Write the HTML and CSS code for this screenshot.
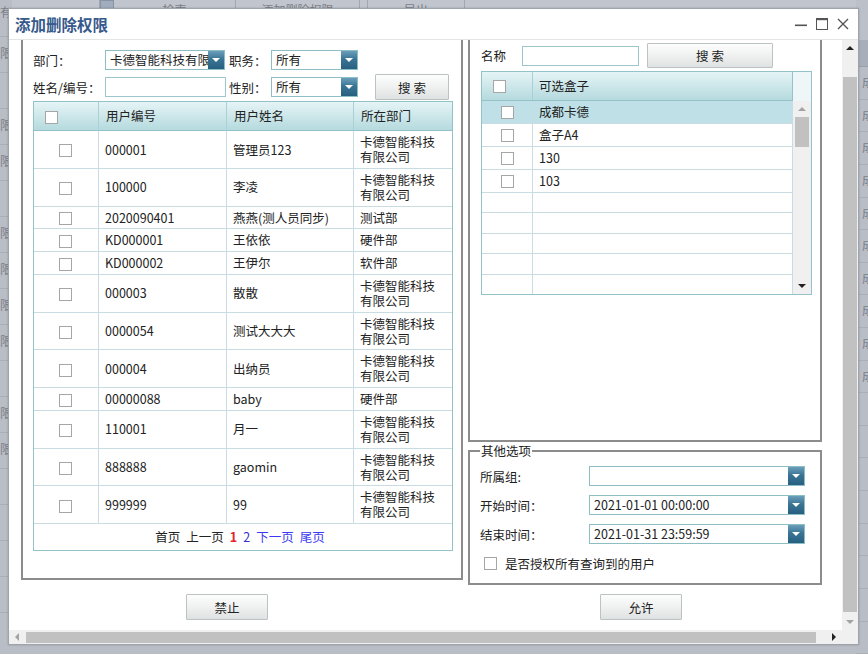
FILE: index.html
```html
<!DOCTYPE html>
<html lang="zh-CN">
<head>
<meta charset="utf-8">
<title>添加删除权限</title>
<link rel="stylesheet" href="styles.css">
</head>
<body>
<div class="page">
  <div class="pg-left">
    <div class="pl-head">有</div>
    <div class="pl-row">限</div>
    <div class="pl-row"></div>
    <div class="pl-row">限</div>
    <div class="pl-row">限</div>
    <div class="pl-row"></div>
    <div class="pl-row">限</div>
    <div class="pl-row">限</div>
    <div class="pl-row">限</div>
    <div class="pl-row">限</div>
    <div class="pl-row"></div>
    <div class="pl-row">限</div>
    <div class="pl-row">限</div>
    <div class="pl-row"></div>
    <div class="pl-row"></div>
    <div class="pl-row"></div>
    <div class="pl-row"></div>
  </div>
  <div class="pg-center">
    <div class="page-head">
      <div class="ph ph-1"></div>
      <div class="ph ph-2"></div>
      <div class="ph ph-3">检索</div>
      <div class="ph ph-4">添加删除权限</div>
      <div class="ph ph-5"></div>
      <div class="ph ph-6">导出</div>
      <div class="ph ph-7"></div>
    </div>
  </div>
  <div class="pg-right">
    <div class="pr-top"></div>
    <div class="pr-head"></div>
    <div class="pr-row">成</div>
    <div class="pr-row">成</div>
    <div class="pr-row">成</div>
    <div class="pr-row">成</div>
    <div class="pr-row">成</div>
    <div class="pr-row">成</div>
    <div class="pr-row">成</div>
    <div class="pr-row">成</div>
    <div class="pr-row">成</div>
    <div class="pr-row">成</div>
    <div class="pr-row"></div>
    <div class="pr-row"></div>
    <div class="pr-row"></div>
    <div class="pr-row"></div>
    <div class="pr-row"></div>
    <div class="pr-row"></div>
    <div class="pr-row"></div>
    <div class="pr-row"></div>
  </div>
</div>

<div class="dialog">
  <div class="titlebar">
    <div class="title">添加删除权限</div>
    <div class="win-ctrls">
      <svg viewBox="0 0 12 12" aria-label="最小化"><rect x="0" y="6.5" width="12" height="1.6" fill="#555"/></svg>
      <svg viewBox="0 0 12 12" aria-label="最大化"><rect x="0.5" y="0.5" width="11" height="11" fill="none" stroke="#555" stroke-width="1"/><rect x="0" y="0" width="12" height="2.2" fill="#555"/></svg>
      <svg viewBox="0 0 12 12" aria-label="关闭"><path d="M1 1 L11 11 M11 1 L1 11" stroke="#555" stroke-width="1.4" fill="none"/></svg>
    </div>
  </div>

  <div class="dlg-main">
    <div class="viewport">
      <div class="content">
        <div class="panel panel-left">
          <div class="filters">
            <span class="lbl">部门：</span>
            <div class="combo w120"><span class="combo-text">卡德智能科技有限</span><span class="combo-btn"><i class="tri-w"></i></span></div>
            <span class="lbl">职务：</span>
            <div class="combo"><span class="combo-text">所有</span><span class="combo-btn"><i class="tri-w"></i></span></div>
            <span></span>
            <span></span>

            <span class="lbl">姓名/编号：</span>
            <input class="txt w121" type="text">
            <span class="lbl">性别：</span>
            <div class="combo"><span class="combo-text">所有</span><span class="combo-btn"><i class="tri-w"></i></span></div>
            <span></span>
            <button class="btn btn-search">搜 索</button>
          </div>

          <table class="ugrid">
            <colgroup><col class="k1"><col class="k2"><col class="k3"><col class="k4"></colgroup>
            <thead>
              <tr><th class="th-cb"><span class="cb"></span></th><th>用户编号</th><th>用户姓名</th><th>所在部门</th></tr>
            </thead>
            <tbody>
              <tr><td class="cbc"><span class="cb"></span></td><td>000001</td><td>管理员123</td><td>卡德智能科技有限公司</td></tr>
              <tr><td class="cbc"><span class="cb"></span></td><td>100000</td><td>李凌</td><td>卡德智能科技有限公司</td></tr>
              <tr><td class="cbc"><span class="cb"></span></td><td>2020090401</td><td>燕燕(测人员同步)</td><td>测试部</td></tr>
              <tr><td class="cbc"><span class="cb"></span></td><td>KD000001</td><td>王依依</td><td>硬件部</td></tr>
              <tr><td class="cbc"><span class="cb"></span></td><td>KD000002</td><td>王伊尔</td><td>软件部</td></tr>
              <tr><td class="cbc"><span class="cb"></span></td><td>000003</td><td>散散</td><td>卡德智能科技有限公司</td></tr>
              <tr><td class="cbc"><span class="cb"></span></td><td>0000054</td><td>测试大大大</td><td>卡德智能科技有限公司</td></tr>
              <tr><td class="cbc"><span class="cb"></span></td><td>000004</td><td>出纳员</td><td>卡德智能科技有限公司</td></tr>
              <tr><td class="cbc"><span class="cb"></span></td><td>00000088</td><td>baby</td><td>硬件部</td></tr>
              <tr><td class="cbc"><span class="cb"></span></td><td>110001</td><td>月一</td><td>卡德智能科技有限公司</td></tr>
              <tr><td class="cbc"><span class="cb"></span></td><td>888888</td><td>gaomin</td><td>卡德智能科技有限公司</td></tr>
              <tr><td class="cbc"><span class="cb"></span></td><td>999999</td><td>99</td><td>卡德智能科技有限公司</td></tr>
              <tr class="pager"><td colspan="4"><div class="pager-links"><span>首页</span><span>上一页</span><span class="cur">1</span><span class="pg">2</span><span class="lnk">下一页</span><span class="lnk">尾页</span></div></td></tr>
            </tbody>
          </table>
        </div>

        <div class="col-right">
          <div class="panel panel-right">
            <div class="search-row">
              <span class="lbl lbl-name">名称</span>
              <input class="txt w117" type="text">
              <button class="btn btn-search2">搜 索</button>
            </div>
            <div class="box-grid">
              <div class="bg-main">
                <div class="bg-head"><div class="c1 c1-head"><span class="cb"></span></div><div class="c2">可选盒子</div></div>
                <div class="bg-row sel"><div class="c1"><span class="cb"></span></div><div class="c2">成都卡德</div></div>
                <div class="bg-row"><div class="c1"><span class="cb"></span></div><div class="c2">盒子A4</div></div>
                <div class="bg-row"><div class="c1"><span class="cb"></span></div><div class="c2">130</div></div>
                <div class="bg-row"><div class="c1"><span class="cb"></span></div><div class="c2">103</div></div>
                <div class="bg-row empty"><div class="c1"></div><div class="c2"></div></div>
                <div class="bg-row empty"><div class="c1"></div><div class="c2"></div></div>
                <div class="bg-row empty"><div class="c1"></div><div class="c2"></div></div>
                <div class="bg-row empty"><div class="c1"></div><div class="c2"></div></div>
                <div class="bg-row empty last"><div class="c1"></div><div class="c2"></div></div>
              </div>
              <div class="bg-scroll">
                <div class="bg-cap"></div>
                <div class="bg-track">
                  <div class="arr"><i class="tri-up light"></i></div>
                  <div class="bg-thumb"></div>
                  <div class="fill"></div>
                  <div class="arr"><i class="tri-down"></i></div>
                </div>
              </div>
            </div>
          </div>

          <fieldset class="options">
            <legend>其他选项</legend>
            <div class="opt-row">
              <span class="lbl lbl-opt">所属组:</span>
              <div class="combo w216"><span class="combo-text"></span><span class="combo-btn"><i class="tri-w"></i></span></div>
            </div>
            <div class="opt-row">
              <span class="lbl lbl-opt">开始时间：</span>
              <div class="combo w216"><span class="combo-text">2021-01-01 00:00:00</span><span class="combo-btn"><i class="tri-w"></i></span></div>
            </div>
            <div class="opt-row">
              <span class="lbl lbl-opt">结束时间：</span>
              <div class="combo w216"><span class="combo-text">2021-01-31 23:59:59</span><span class="combo-btn"><i class="tri-w"></i></span></div>
            </div>
            <div class="check-row"><span class="cb"></span><span>是否授权所有查询到的用户</span></div>
          </fieldset>
        </div>

        <div class="btn-row btn-row-left"><button class="btn btn-action">禁止</button></div>
        <div class="btn-row btn-row-right"><button class="btn btn-action">允许</button></div>
      </div>
    </div>
    <div class="vscroll">
      <div class="arr"><i class="tri-up"></i></div>
      <div class="v-thumb"></div>
      <div class="fill"></div>
      <div class="arr"><i class="tri-down light"></i></div>
    </div>
  </div>

  <div class="hrow">
    <div class="hscroll">
      <div class="harr"><i class="tri-left light"></i></div>
      <div class="h-thumb"></div>
      <div class="fill"></div>
      <div class="harr"><i class="tri-right"></i></div>
    </div>
    <div class="corner"></div>
  </div>
</div>
</body>
</html>
```

FILE: styles.css
```css
* { box-sizing: border-box; }
html, body { margin: 0; padding: 0; }
body {
  width: 868px;
  height: 654px;
  overflow: hidden;
  position: relative;
  background: #b9bdc6;
  font-family: "Noto Sans CJK SC", "Microsoft YaHei", sans-serif;
  font-size: 12.5px;
  color: #222;
}

/* ---------- background page (dimmed) ---------- */
.page {
  width: 868px;
  height: 654px;
  display: flex;
  color: #7b7f88;
}
.pg-left { width: 12px; flex: none; display: flex; flex-direction: column; }
.pl-head { height: 37px; line-height: 24px; border-bottom: 1px solid #aaaeb7; text-align: right; overflow: hidden; white-space: nowrap; font-size: 12px; }
.pl-row { height: 36px; line-height: 32px; border-bottom: 1px solid #aaaeb7; text-align: right; overflow: hidden; white-space: nowrap; font-size: 12px; }
.pg-center { flex: 1; }
.page-head { display: flex; height: 30px; background: #c1c5cd; border-bottom: 1px solid #a9adb6; }
.ph { border-right: 1px solid #a2a6af; line-height: 20px; text-align: center; font-size: 12px; overflow: hidden; white-space: nowrap; }
.ph-1 { width: 88px; }
.ph-2 { width: 14px; background: #a0adbf; border: 1px solid #8893a3; height: 9px; }
.ph-3 { width: 122px; }
.ph-4 { width: 124px; }
.ph-5 { width: 8px; }
.ph-6 { width: 97px; }
.ph-7 { flex: 1; border-right: none; }
.pg-right { width: 12px; flex: none; display: flex; flex-direction: column; }
.pr-top { height: 40px; background: #bcc0c9; }
.pr-head { height: 28px; background: #a8afbb; border-bottom: 1px solid #9aa0aa; }
.pr-row { height: 33px; line-height: 30px; border-bottom: 1px solid #abafb8; text-align: left; padding-left: 6px; overflow: hidden; white-space: nowrap; font-size: 12px; }

/* ---------- dialog ---------- */
.dialog {
  position: absolute;
  left: 8px;
  top: 8px;
  width: 851px;
  height: 637px;
  background: #fff;
  border: 1px solid #9fa3aa;
  display: flex;
  flex-direction: column;
  box-shadow: 0 0 2px rgba(0, 0, 0, 0.2);
}
.titlebar {
  height: 31px;
  flex: none;
  display: flex;
  align-items: center;
  justify-content: space-between;
  padding: 0 9px 0 6px;
  border-bottom: 1px solid #e4e4e4;
}
.title { font-size: 15.5px; font-weight: bold; color: #37598b; line-height: 30px; }
.win-ctrls { display: flex; gap: 9px; align-items: center; }
.win-ctrls svg { display: block; width: 12px; height: 12px; }

.dlg-main { height: 590px; flex: none; display: flex; }
.viewport { flex: 1; overflow: hidden; position: relative; }
.content {
  margin-top: -10px;
  padding-left: 12px;
  display: grid;
  grid-template-columns: 442px 354px;
  grid-template-rows: auto auto;
  column-gap: 5px;
  row-gap: 9px;
  align-items: start;
}

.panel { border: 2px solid #8c8c8c; background: #fff; }
.panel-left { height: 550px; padding: 18px 10px 0 10px; }

.lbl { white-space: nowrap; }

.filters {
  display: grid;
  grid-template-columns: 72px 124px 42px 87px 17px 74px;
  grid-template-rows: 20px 26px;
  row-gap: 4px;
  align-items: center;
}

.combo {
  height: 20px;
  border: 1px solid #8dbec5;
  display: flex;
  background: #fff;
  overflow: hidden;
}
.combo.w120 { width: 120px; }
.combo.w216 { width: 216px; height: 20px; }
.combo-text { flex: 1; min-width: 0; padding-left: 4px; line-height: 18px; overflow: hidden; white-space: nowrap; }
.combo-btn {
  width: 16px;
  flex: none;
  background: linear-gradient(#6b9fbb 0%, #3a7494 45%, #275f80 100%);
  display: flex;
  align-items: center;
  justify-content: center;
}
.tri-w { display: block; width: 0; height: 0; border-left: 4px solid transparent; border-right: 4px solid transparent; border-top: 4px solid #fff; }

.txt {
  height: 20px;
  border: 1px solid #9cc6cb;
  padding: 0 3px;
  font: inherit;
  outline: none;
  background: #fff;
}
.txt.w121 { width: 121px; }
.txt.w117 { width: 117px; }

.btn {
  font-family: inherit;
  font-size: 12.5px;
  color: #222;
  border: 1px solid #bcc1c2;
  border-radius: 1px;
  background: linear-gradient(#fdfdfd 0%, #f1f2f2 45%, #dfe2e2 100%);
  padding: 0;
  cursor: pointer;
}
.btn-search { width: 74px; height: 26px; }

.cb {
  display: inline-block;
  width: 13px;
  height: 13px;
  border: 1px solid #a6a6a6;
  background: #fff;
  vertical-align: middle;
}

/* ---------- user table ---------- */
.ugrid {
  margin-top: 1px;
  width: 420px;
  table-layout: fixed;
  border-collapse: separate;
  border-spacing: 0;
  border: 1px solid #93c3c9;
}
.ugrid col.k1 { width: 65px; }
.ugrid col.k2 { width: 128px; }
.ugrid col.k3 { width: 127px; }
.ugrid col.k4 { width: 98px; }
.ugrid th {
  padding: 0 0 0 7px;
  line-height: 28px;
  text-align: left;
  font-weight: normal;
  background: linear-gradient(#e5f4f6, #b5dade);
  border-right: 1px solid #a8d0d5;
  border-bottom: 1px solid #93c3c9;
}
.ugrid th.th-cb { padding-left: 11px; }
.ugrid th:last-child { border-right: none; }
.ugrid td {
  padding: 3px 10px 3.75px 6px;
  line-height: 15px;
  border-right: 1px solid #c9dce2;
  border-bottom: 1px solid #c9dce2;
  vertical-align: middle;
}
.ugrid td:last-child { border-right: none; }
.ugrid td.cbc { text-align: center; padding: 0 1px 0 0; }
.ugrid td.cbc .cb { vertical-align: middle; }
.ugrid .pager td { padding: 0; line-height: 26px; border-bottom: none; }
.pager-links { display: flex; justify-content: center; gap: 6px; padding-right: 6px; }
.pager-links .cur { color: #e8202a; font-weight: bold; }
.pager-links .pg { color: #2f2fd0; }
.pager-links .lnk { color: #3a3af2; }

/* ---------- right column ---------- */
.col-right { display: flex; flex-direction: column; }
.panel-right { height: 412px; padding: 11px 9px 0 11px; }
.search-row { display: flex; align-items: center; height: 25px; }
.lbl-name { width: 41px; }
.btn-search2 { width: 126px; height: 25px; margin-left: 8px; }

.box-grid {
  margin-top: 3px;
  width: 331px;
  height: 224px;
  border: 1px solid #93c3c9;
  display: flex;
}
.bg-main { width: 311px; display: flex; flex-direction: column; }
.bg-head {
  height: 29px;
  flex: none;
  display: flex;
  background: linear-gradient(#e5f4f6, #b5dade);
  border-bottom: 1px solid #93c3c9;
}
.bg-head .c1 { width: 51px; border-right: 1px solid #a8d0d5; display: flex; align-items: center; padding-left: 11px; }
.bg-head .c2 { flex: 1; border-right: 1px solid #93c3c9; line-height: 28px; padding-left: 6px; }
.bg-row { height: 23px; flex: none; display: flex; border-bottom: 1px solid #c9dce2; }
.bg-row .c1 { width: 51px; border-right: 1px solid #c9dce2; display: flex; align-items: center; justify-content: center; }
.bg-row .c2 { flex: 1; border-right: 1px solid #c9dce2; line-height: 22px; padding-left: 6px; }
.bg-row.sel { background: #bfe0e7; }
.bg-row.empty { height: auto; flex: 1 1 0; }
.bg-row.last { border-bottom: none; }

.bg-scroll { width: 18px; display: flex; flex-direction: column; }
.bg-cap { height: 29px; flex: none; background: #eef6f8; }
.bg-track { flex: 1; background: #f0f0f0; display: flex; flex-direction: column; }
.bg-thumb { height: 30px; width: 14px; margin-left: 2px; background: #c1c1c1; flex: none; }

.arr { height: 16px; flex: none; display: flex; align-items: center; justify-content: center; }
.fill { flex: 1; }
.tri-up { display: block; width: 0; height: 0; border-left: 4px solid transparent; border-right: 4px solid transparent; border-bottom: 4px solid #222; }
.tri-down { display: block; width: 0; height: 0; border-left: 4px solid transparent; border-right: 4px solid transparent; border-top: 4px solid #222; }
.tri-left { display: block; width: 0; height: 0; border-top: 4px solid transparent; border-bottom: 4px solid transparent; border-right: 4px solid #222; }
.tri-right { display: block; width: 0; height: 0; border-top: 4px solid transparent; border-bottom: 4px solid transparent; border-left: 4px solid #222; }
.tri-up.light { border-bottom-color: #a3a3a3; }
.tri-down.light { border-top-color: #a3a3a3; }
.tri-left.light { border-right-color: #a3a3a3; }

/* ---------- options fieldset ---------- */
.options {
  margin: 0;
  min-width: 0;
  border: 2px solid #8c8c8c;
  padding: 7px 14px 12px 10px;
}
.options legend { padding: 0 1px; line-height: 17px; }
.opt-row { display: flex; align-items: center; height: 20px; margin-bottom: 9px; }
.opt-row:nth-of-type(3) { margin-bottom: 0; }
.lbl-opt { width: 109px; }
.check-row { display: flex; align-items: center; gap: 8px; margin-top: 12px; padding-left: 4px; height: 15px; }

/* ---------- action buttons ---------- */
.btn-row { display: flex; }
.btn-row-left { padding-left: 165px; }
.btn-row-right { padding-left: 132px; }
.btn-action { width: 82px; height: 26px; }

/* ---------- dialog scrollbars ---------- */
.vscroll { width: 16px; flex: none; background: #f0f0f0; display: flex; flex-direction: column; }
.v-thumb { width: 14px; margin-left: 1px; margin-top: 21px; height: 535px; background: #c1c1c1; flex: none; }
.hrow { height: 14px; flex: none; display: flex; }
.hscroll { flex: 1; background: #f0f0f0; display: flex; align-items: center; }
.harr { width: 16px; height: 14px; flex: none; display: flex; align-items: center; justify-content: center; }
.h-thumb { width: 790px; height: 11px; margin-left: 1px; background: #c1c1c1; flex: none; }
.corner { width: 16px; flex: none; background: #f0f0f0; }
```
